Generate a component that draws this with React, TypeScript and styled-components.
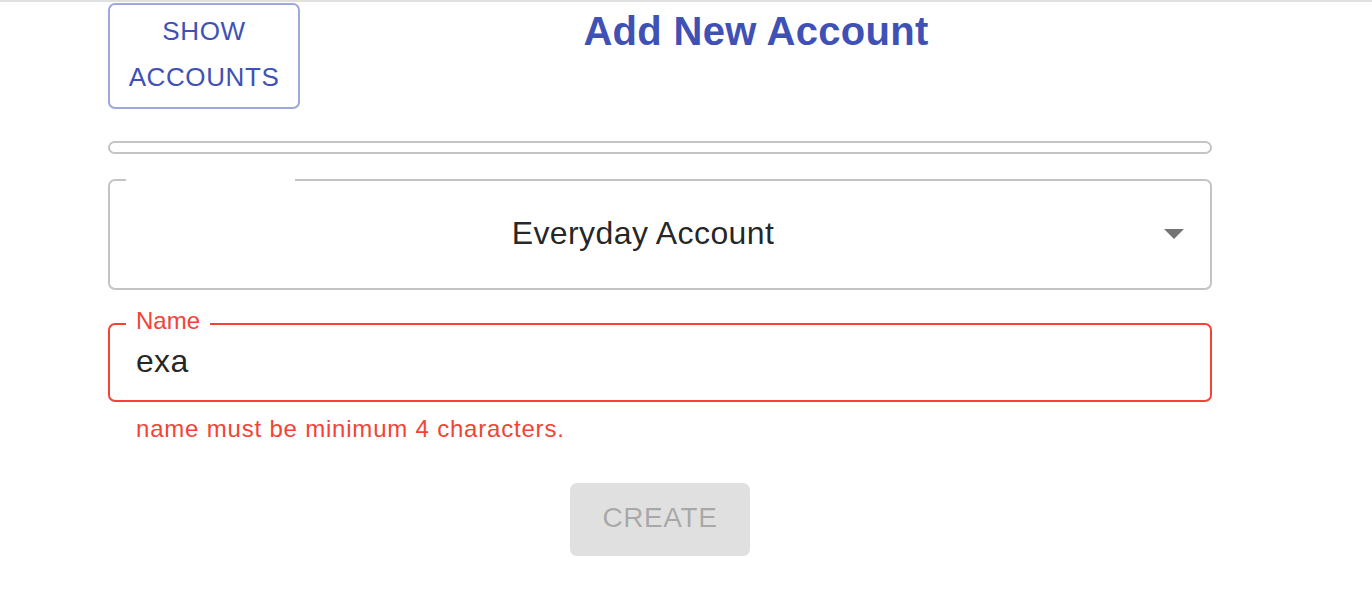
import React from "react";
import styled, { createGlobalStyle } from "styled-components";

const Global = createGlobalStyle`
  html, body { margin: 0; padding: 0; background: #fff; }
  body { font-family: "Liberation Sans", Arial, sans-serif; }
  * { box-sizing: border-box; }
`;

const TopRule = styled.div`
  height: 2px;
  background: #e0e0e0;
`;

const Container = styled.div`
  width: 1104px;
  margin-left: 108px;
`;

const Header = styled.div`
  display: flex;
  align-items: flex-start;
`;

const OutlinedButton = styled.button`
  margin-top: 1px;
  width: 192px;
  height: 106px;
  padding: 3px 10px 7px;
  border: 2px solid #9fa8da;
  border-radius: 7px;
  background: #fff;
  color: #3f51b5;
  font-family: "Liberation Sans", Arial, sans-serif;
  font-size: 26px;
  line-height: 46px;
  letter-spacing: 0.6px;
  text-transform: uppercase;
  text-align: center;
`;

const Title = styled.h1`
  flex: 1;
  margin: 6px 0 0;
  text-align: center;
  color: #3f51b5;
  font-size: 40px;
  line-height: 47px;
  letter-spacing: 0.3px;
  font-weight: 700;
`;

const EmptyBar = styled.div`
  margin-top: 32px;
  height: 13px;
  border: 2px solid #c4c4c4;
  border-radius: 7px;
`;

const Field = styled.div<{ $height: number; $mt: number }>`
  position: relative;
  height: ${(p) => p.$height}px;
  margin-top: ${(p) => p.$mt}px;
`;

const Outline = styled.fieldset<{ $color: string; $top: number }>`
  position: absolute;
  left: 0;
  right: 0;
  bottom: 0;
  top: ${(p) => p.$top}px;
  margin: 0;
  padding: 0 0 0 16px;
  border: 2px solid ${(p) => p.$color};
  border-radius: 7px;
  pointer-events: none;
`;

const HiddenLegend = styled.legend<{ $width: number }>`
  width: ${(p) => p.$width}px;
  height: 0;
  padding: 0;
  font-size: 0;
  line-height: 0;
`;

const LabelLegend = styled.legend<{ $color: string }>`
  padding: 0 10px 6px;
  font-size: 24px;
  line-height: 24px;
  color: ${(p) => p.$color};
`;

const SelectBody = styled.div`
  height: 100%;
  display: flex;
  align-items: center;
  padding: 0 64px 3px 30px;
`;

const SelectValue = styled.div`
  flex: 1;
  text-align: center;
  font-size: 32px;
  letter-spacing: 0.4px;
  color: rgba(0, 0, 0, 0.87);
`;

const Arrow = styled.svg`
  position: absolute;
  right: 14px;
  top: 50%;
  margin-top: -26px;
  width: 48px;
  height: 48px;
  fill: rgba(0, 0, 0, 0.54);
`;

const InputText = styled.div`
  padding: 20px 28px 0;
  font-size: 32px;
  line-height: 36px;
  letter-spacing: 0.3px;
  color: rgba(0, 0, 0, 0.87);
`;

const Helper = styled.p`
  margin: 7px 0 0 28px;
  font-size: 24px;
  line-height: 40px;
  letter-spacing: 0.8px;
  color: #f44336;
`;

const Actions = styled.div`
  display: flex;
  justify-content: center;
  margin-top: 34px;
`;

const ContainedButton = styled.button`
  width: 180px;
  height: 73px;
  border: none;
  border-radius: 7px;
  background: #e0e0e0;
  color: rgba(0, 0, 0, 0.26);
  font-family: "Liberation Sans", Arial, sans-serif;
  font-size: 28px;
  letter-spacing: 0.6px;
  text-transform: uppercase;
  padding: 0 0 4px;
`;

export default function App() {
  return (
    <>
      <Global />
      <TopRule />
      <Container>
        <Header>
          <OutlinedButton>
            Show
            <br />
            Accounts
          </OutlinedButton>
          <Title>Add New Account</Title>
        </Header>
        <EmptyBar />
        <Field $height={111} $mt={25}>
          <Outline $color="#c4c4c4" $top={0}>
            <HiddenLegend $width={169} />
          </Outline>
          <SelectBody>
            <SelectValue>Everyday Account</SelectValue>
          </SelectBody>
          <Arrow viewBox="0 0 24 24">
            <path d="M7 10l5 5 5-5z" />
          </Arrow>
        </Field>
        <Field $height={79} $mt={33}>
          <Outline $color="#f44336" $top={-14}>
            <LabelLegend $color="#f44336">Name</LabelLegend>
          </Outline>
          <InputText>exa</InputText>
        </Field>
        <Helper>name must be minimum 4 characters.</Helper>
        <Actions>
          <ContainedButton disabled>Create</ContainedButton>
        </Actions>
      </Container>
    </>
  );
}
